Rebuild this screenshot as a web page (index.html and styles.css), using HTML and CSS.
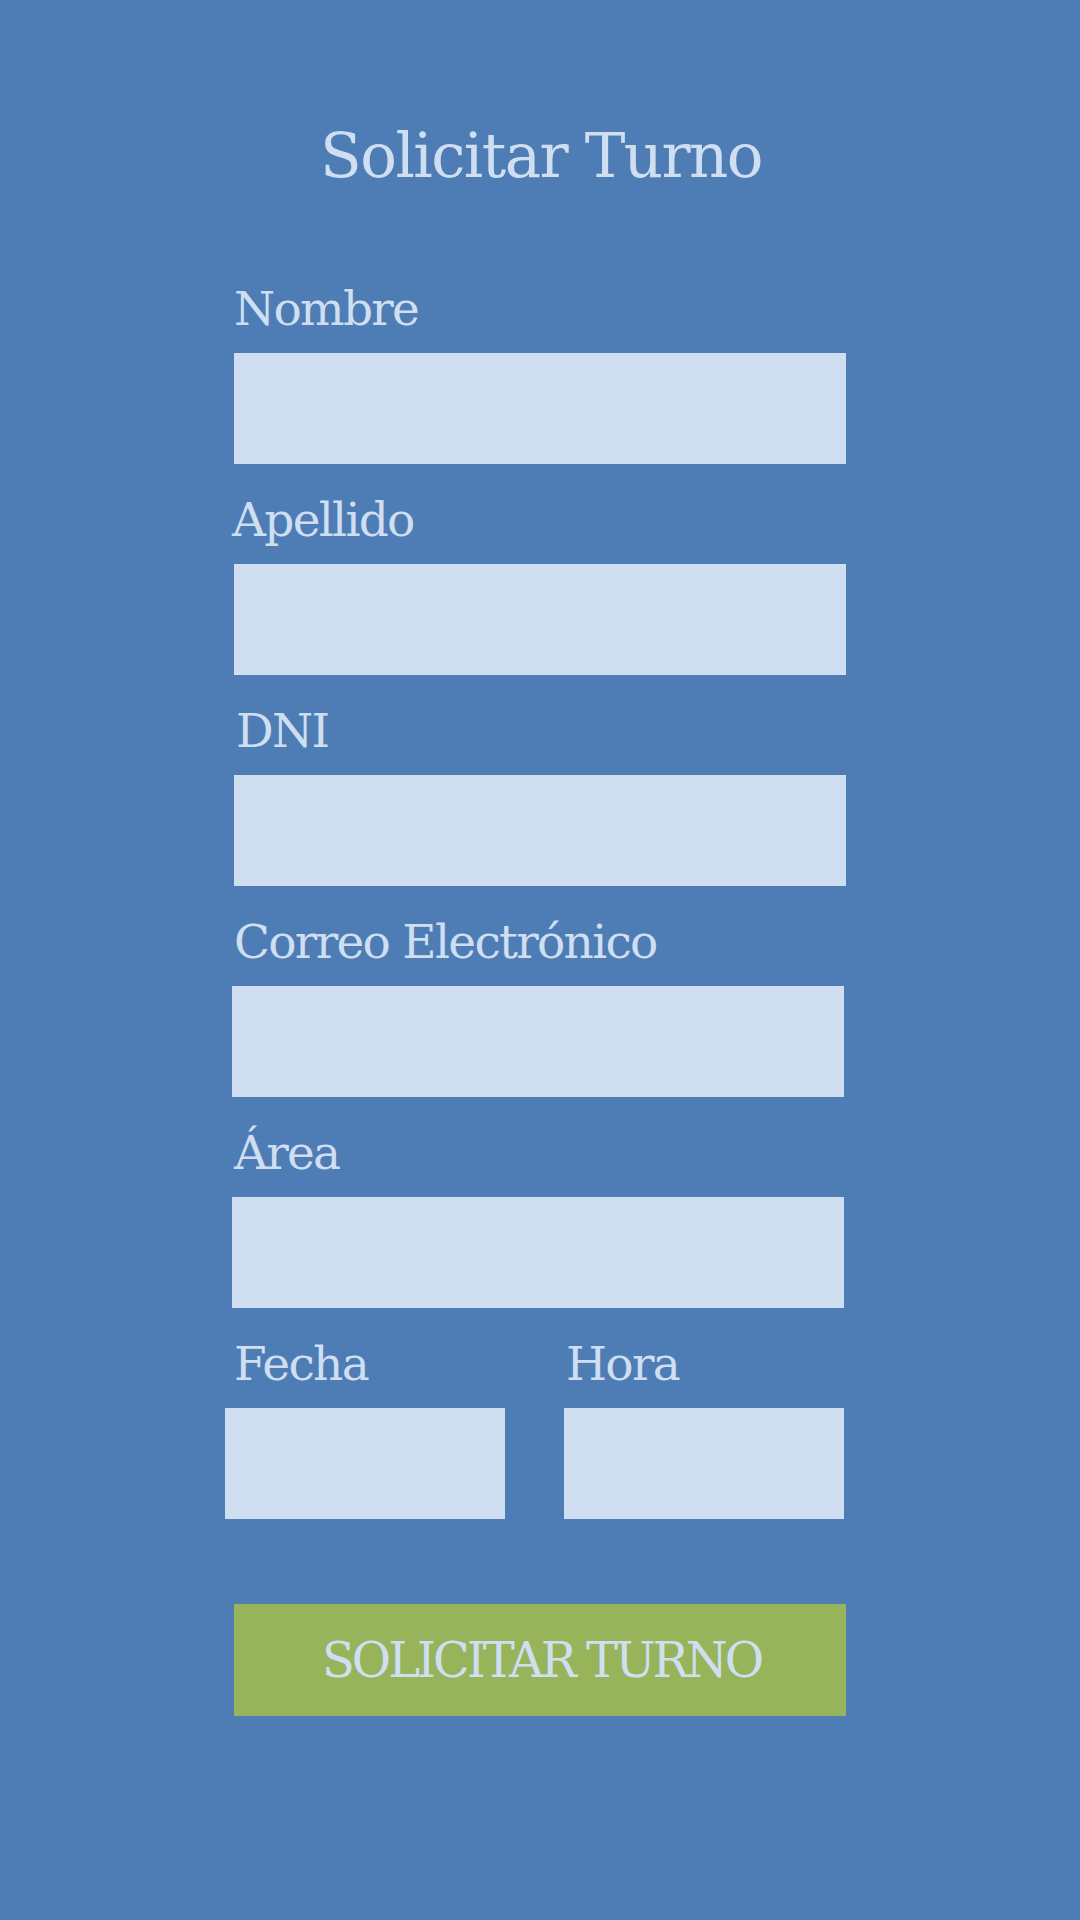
FILE: index.html
```html
<!DOCTYPE html>
<html lang="es">
<head>
<meta charset="utf-8">
<title>Solicitar Turno</title>
<link rel="stylesheet" href="styles.css">
</head>
<body>
<main class="page">
  <form class="form">
    <h1 class="title"><span class="title-text">Solicitar Turno</span></h1>
    <div class="fields">
      <div class="field">
        <label class="label"><span class="label-text">Nombre</span></label>
        <input class="input" type="text">
      </div>
      <div class="field">
        <label class="label label-apellido"><span class="label-text">Apellido</span></label>
        <input class="input" type="text">
      </div>
      <div class="field">
        <label class="label label-dni"><span class="label-text">DNI</span></label>
        <input class="input" type="text">
      </div>
      <div class="field">
        <label class="label"><span class="label-text">Correo Electrónico</span></label>
        <input class="input input-shift" type="email">
      </div>
      <div class="field">
        <label class="label"><span class="label-text">Área</span></label>
        <input class="input input-shift" type="text">
      </div>
      <div class="field-row">
        <div class="field field-half field-fecha">
          <label class="label"><span class="label-text">Fecha</span></label>
          <input class="input" type="text">
        </div>
        <div class="field field-half field-hora">
          <label class="label"><span class="label-text">Hora</span></label>
          <input class="input" type="text">
        </div>
      </div>
    </div>
    <button class="submit" type="button"><span class="submit-text">SOLICITAR TURNO</span></button>
  </form>
</main>
</body>
</html>
```

FILE: styles.css
```css
html, body {
  margin: 0;
  padding: 0;
}

body {
  background: #4e7db5;
  width: 1080px;
  height: 1920px;
  font-family: "DejaVu Serif", "Liberation Serif", serif;
  color: #cfdff1;
}

.page {
  padding-top: 120px;
}

.form {
  margin-left: 234px;
  width: 612px;
}

.title {
  margin: 0;
  font-weight: normal;
  font-size: 61px;
  line-height: 72px;
  height: 72px;
  text-align: center;
  white-space: nowrap;
  letter-spacing: -1.6px;
}

.title-text {
  display: inline-block;
  padding-left: 2px;
}

.fields {
  margin-top: 89px;
  display: flex;
  flex-direction: column;
  gap: 28px;
}

.field {
  display: flex;
  flex-direction: column;
}

.label {
  display: block;
  font-size: 47px;
  line-height: 55px;
  height: 53px;
  margin-bottom: 19px;
  white-space: nowrap;
  padding-left: 0;
  letter-spacing: -1.7px;
}

.label-apellido {
  margin-left: -2px;
}

.label-dni {
  padding-left: 2px;
}

.label-text {
  display: inline-block;
}

.input {
  display: block;
  box-sizing: border-box;
  width: 100%;
  height: 111px;
  margin: 0;
  padding: 0;
  border: 0;
  outline: none;
  background: #cfdef0;
}

.input-shift {
  width: 612px;
  margin-left: -2px;
}

.field-row {
  display: flex;
  justify-content: space-between;
  margin-left: -9px;
  margin-right: 2px;
}

.field-half {
  width: 280px;
}

.field-fecha .label {
  padding-left: 9px;
}

.field-hora .label {
  padding-left: 2px;
}

.submit {
  display: block;
  width: 612px;
  height: 112px;
  margin: 85px 0 0 0;
  padding: 0;
  border: 0;
  background: #98b45b;
  color: #cfdff1;
  font-family: "DejaVu Serif", "Liberation Serif", serif;
  font-size: 48px;
  line-height: 112px;
  text-align: center;
  white-space: nowrap;
  letter-spacing: -3px;
}

.submit-text {
  display: inline-block;
  padding-left: 3px;
}
```
